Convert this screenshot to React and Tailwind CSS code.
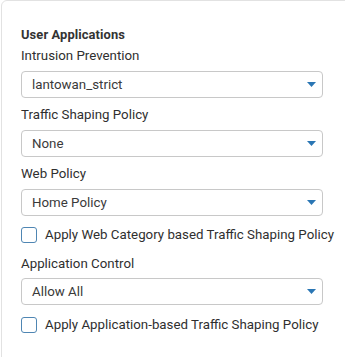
import React from 'react';

const Caret = () => (
    <svg width="9" height="5" viewBox="0 0 9 5" className="shrink-0">
        <path d="M0 0 H9 L4.5 5 Z" fill="#2a76b4" />
    </svg>
);

const SelectBox = ({ value }) => (
    <div className="h-[27px] w-[302px] flex items-center justify-between rounded-[4px] border border-[#c8c8c8] bg-white pl-[10px] pr-[6px] text-[13.3px] text-[#3a3a3a]">
        <span>{value}</span>
        <Caret />
    </div>
);

const Label = ({ children, className = '' }) => (
    <div className={`text-[13.3px] leading-[18px] text-[#2f2f2f] ${className}`}>{children}</div>
);

const CheckRow = ({ children, className = '' }) => (
    <div className={`flex items-center h-[18px] ${className}`}>
        <div className="w-[16px] h-[16px] rounded-[3px] border-[1.5px] border-[#4f86b3] bg-white shrink-0" />
        <span className="ml-[8px] text-[13.3px] leading-[18px] text-[#2f2f2f] whitespace-nowrap">{children}</span>
    </div>
);

export default function App() {
    return (
        <div className="w-[345px] h-[357px] overflow-hidden bg-white" style={{ fontFamily: 'Roboto, "Liberation Sans", sans-serif' }}>
            <div className="ml-[1px] w-[380px] h-[400px] rounded-[6px] border border-[#e2e2e2] pl-[19px] pt-[26px]">
                {/* Section heading */}
                <div className="text-[12.9px] leading-[16px] font-bold text-[#333] tracking-[0.1px]">User Applications</div>

                <Label className="mt-[4px]">Intrusion Prevention</Label>
                <div className="mt-[6px]"><SelectBox value="lantowan_strict" /></div>

                <Label className="mt-[8px]">Traffic Shaping Policy</Label>
                <div className="mt-[6px]"><SelectBox value="None" /></div>

                <Label className="mt-[8px]">Web Policy</Label>
                <div className="mt-[6px]"><SelectBox value="Home Policy" /></div>

                <CheckRow className="mt-[10px]">Apply Web Category based Traffic Shaping Policy</CheckRow>

                <Label className="mt-[11px]">Application Control</Label>
                <div className="mt-[5px]"><SelectBox value="Allow All" /></div>

                <CheckRow className="mt-[11px]">Apply Application-based Traffic Shaping Policy</CheckRow>
            </div>
        </div>
    );
}
